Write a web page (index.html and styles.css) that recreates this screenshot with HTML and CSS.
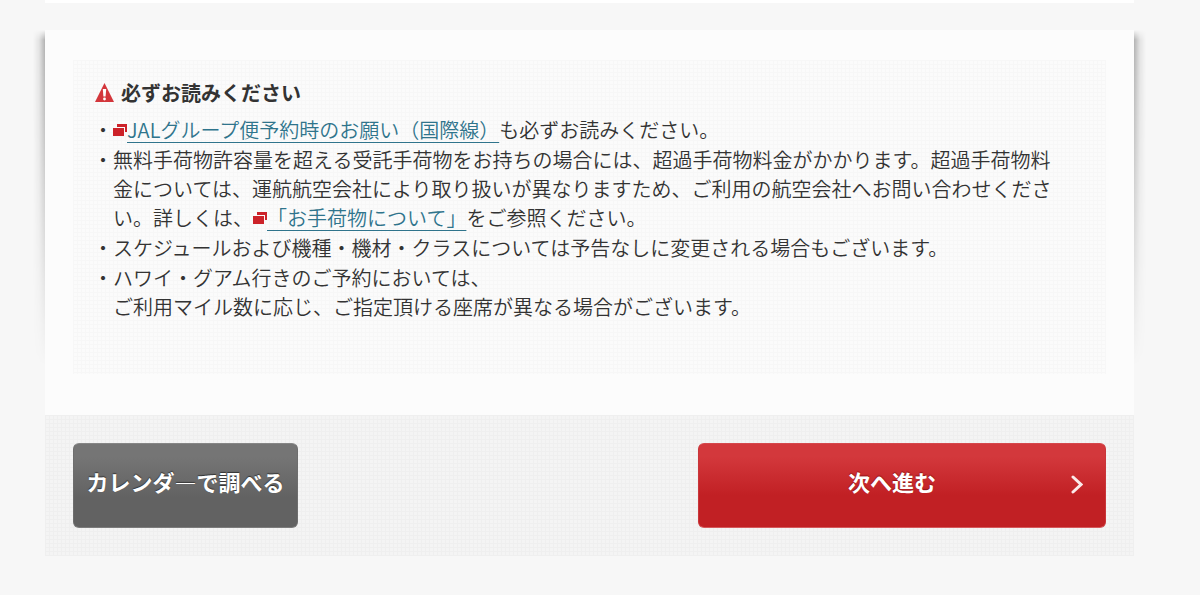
FILE: index.html
```
<!DOCTYPE html>
<html lang="ja">
  <head>
    <meta charset="UTF-8" />
    <meta name="viewport" content="width=device-width, initial-scale=1.0" />
    <title>予約時のご注意</title>
    <link rel="stylesheet" href="styles.css">
  </head>
  <body>
    <div class="previous-section"></div>
    <main class="card">
      <section class="notice">
        <h2>
          <svg class="icon-warning" viewBox="0 0 19 19" aria-hidden="true">
            <path d="M9.500 0L19 19H0Z" fill="#d3363b" />
            <path d="M7.800 6h3.400l-.6 7.500H8.400Z" fill="#fff" />
            <circle cx="9.500" cy="16" r="1.400" fill="#fff" />
          </svg>
          必ずお読みください
        </h2>
        <ul>
          <li><svg class="icon-window" viewBox="0 0 14 12" aria-hidden="true"><path d="M4 0h10v8h-2V3H4Z" /><path d="M0 4h11v8H0Z" /></svg><a href="#">JALグループ便予約時のお願い（国際線）</a>も必ずお読みください。</li>
          <li>無料手荷物許容量を超える受託手荷物をお持ちの場合には、超過手荷物料金がかかります。超過手荷物料金については、運航航空会社により取り扱いが異なりますため、ご利用の航空会社へお問い合わせください。詳しくは、<svg class="icon-window" viewBox="0 0 14 12" aria-hidden="true"><path d="M4 0h10v8h-2V3H4Z" /><path d="M0 4h11v8H0Z" /></svg><a href="#">「お手荷物について」</a>をご参照ください。</li>
          <li>スケジュールおよび機種・機材・クラスについては予告なしに変更される場合もございます。</li>
          <li>ハワイ・グアム行きのご予約においては、<br>ご利用マイル数に応じ、ご指定頂ける座席が異なる場合がございます。</li>
        </ul>
      </section>
    </main>
    <div class="actions">
      <button type="button" class="btn btn-calendar">カレンダ―で調べる</button>
      <button type="submit" class="btn btn-next">
        次へ進む
        <svg class="icon-arrow" viewBox="0 0 12 19" aria-hidden="true">
          <path d="M2 2L10 9.500L2 17" />
        </svg>
      </button>
    </div>
  </body>
</html>
```
FILE: styles.css
```
* {
  box-sizing: border-box;
}

body {
  margin: 0;
  padding: 0 66px 39px 45px;
  background-color: #f7f7f7;
  color: #333;
  font-family: "Noto Sans CJK JP", sans-serif;
  font-size: 20px;
  font-weight: 350;
  line-height: 29px;
}

.previous-section {
  height: 3px;
  margin-bottom: 27px;
  background-color: #fff;
}

.card {
  position: relative;
  padding: 30px 28px 41px;
  background-color: #fcfcfc;
}

/* side shadows, fading out towards the bottom */
.card::before,
.card::after {
  content: "";
  position: absolute;
  top: 0;
  width: 12px;
  height: 336px;
  -webkit-mask-image: linear-gradient(transparent, #000 10px, transparent);
  mask-image: linear-gradient(transparent, #000 10px, transparent);
}

.card::before {
  right: 100%;
  background: linear-gradient(to left, rgba(0, 0, 0, 0.28), rgba(0, 0, 0, 0.08) 50%, transparent);
}

.card::after {
  left: 100%;
  background: linear-gradient(to right, rgba(0, 0, 0, 0.28), rgba(0, 0, 0, 0.08) 50%, transparent);
}

.notice {
  padding: 18px 50px 52px 22px;
  background-color: #fbfbfb;
  background-image:
    linear-gradient(#f7f7f7 1px, transparent 1px),
    linear-gradient(90deg, #f7f7f7 1px, transparent 1px);
  background-size: 4px 4px;
}

.notice h2 {
  display: flex;
  align-items: center;
  gap: 7px;
  margin: 0 0 8px;
  font-size: 20px;
  line-height: 29px;
}

.notice ul {
  margin: 0;
  padding: 0;
  list-style: none;
}

.notice li {
  margin-bottom: 1px;
  padding-left: 18px;
}

.notice li::before {
  content: "・";
  float: left;
  margin-left: -20px;
}

.notice a {
  color: #2f748c;
  text-decoration: underline;
  text-decoration-thickness: 1px;
  text-underline-offset: 4px;
}

.icon-warning {
  width: 19px;
  height: 19px;
}

.icon-window {
  width: 14px;
  height: 12px;
  vertical-align: 2px;
  fill: #cc2229;
}

.actions {
  display: flex;
  justify-content: space-between;
  padding: 28px;
  background-color: #f4f4f4;
  background-image:
    linear-gradient(#efefef 1px, transparent 1px),
    linear-gradient(90deg, #efefef 1px, transparent 1px);
  background-size: 4px 4px;
}

.btn {
  position: relative;
  height: 85px;
  padding: 0 0 10px;
  border: 1px solid;
  border-radius: 6px;
  color: #fff;
  font-family: inherit;
  font-size: 22px;
  font-weight: bold;
  cursor: pointer;
}

.btn-calendar {
  width: 225px;
  border-color: #868686 #6e6e6e #7c7c7c;
  background: linear-gradient(#757575 15%, #626262 65%);
  text-shadow: 0 -1px 1px #333;
}

.btn-next {
  width: 408px;
  padding-right: 20px;
  border-color: #d5484c #c9363a #d5595c;
  background: linear-gradient(#d3383c 15%, #c12024 62%);
  text-shadow: 0 -1px 1px #8e1216;
}

.icon-arrow {
  position: absolute;
  top: 31px;
  right: 22px;
  width: 12px;
  height: 19px;
  fill: none;
  stroke: #fbeaea;
  stroke-width: 3;
  stroke-linecap: round;
}
```
